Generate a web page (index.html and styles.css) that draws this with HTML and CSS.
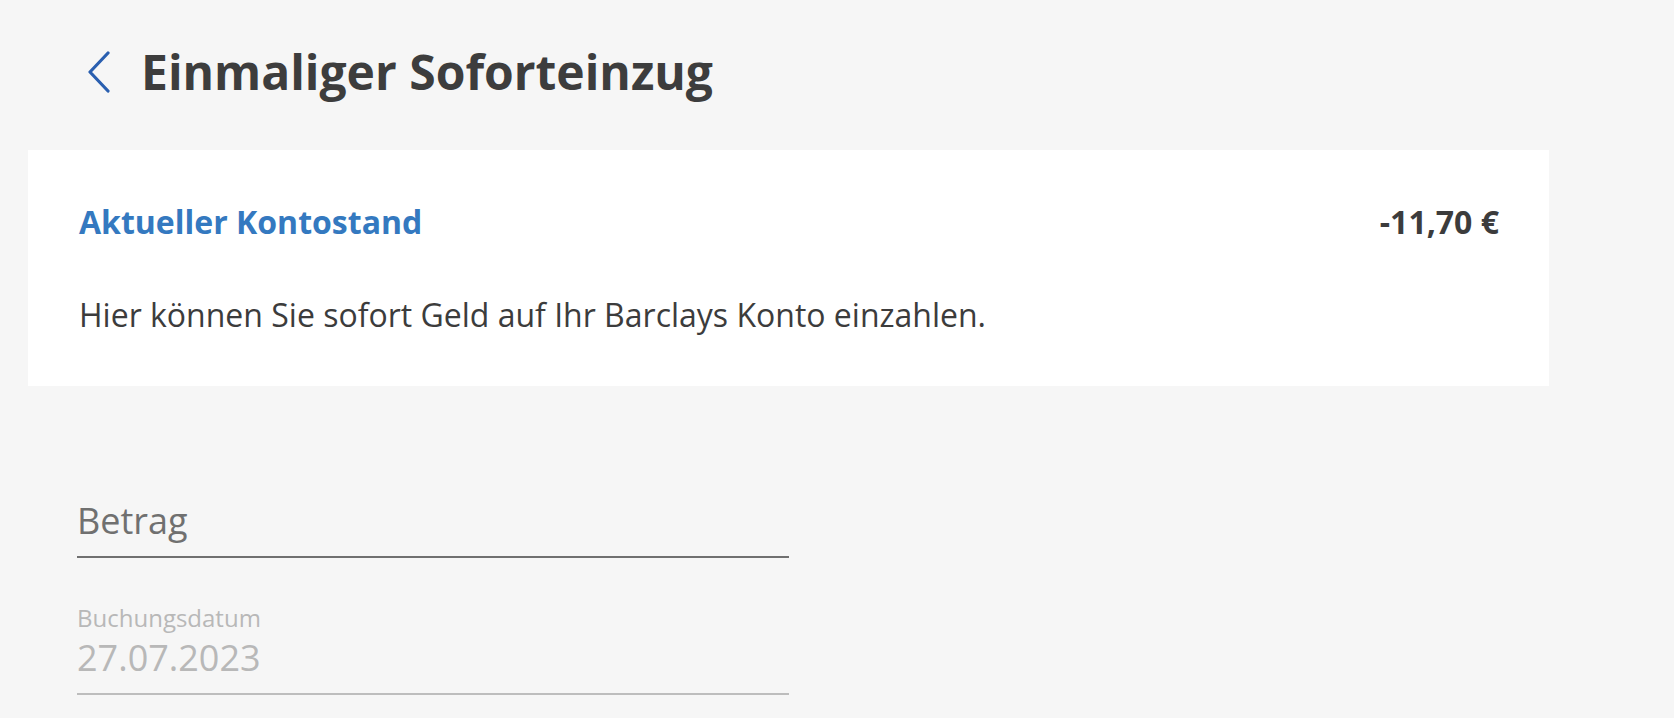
FILE: index.html
```html
<!DOCTYPE html>
<html lang="de">
<head>
<meta charset="utf-8">
<title>Einmaliger Soforteinzug</title>
<link rel="stylesheet" href="styles.css">
</head>
<body>
<div class="page">
  <header class="header">
    <button class="back" aria-label="Zurück">
      <svg width="24" height="42" viewBox="0 0 24 42"><path d="M21 2 L3 21 L21 40" fill="none" stroke="#2a5fb0" stroke-width="3.2" stroke-linecap="round" stroke-linejoin="round"/></svg>
    </button>
    <h1 class="title">Einmaliger Soforteinzug</h1>
  </header>

  <section class="card">
    <div class="card-row">
      <span class="card-label">Aktueller Kontostand</span>
      <span class="card-amount">-11,70 €</span>
    </div>
    <p class="card-text">Hier können Sie sofort Geld auf Ihr Barclays Konto einzahlen.</p>
  </section>

  <form class="form">
    <div class="field">
      <div class="field-input placeholder">Betrag</div>
    </div>
    <div class="field disabled">
      <div class="field-label">Buchungsdatum</div>
      <div class="field-input">27.07.2023</div>
    </div>
  </form>
</div>
</body>
</html>
```

FILE: styles.css
```css
html, body {
  margin: 0;
  padding: 0;
  background: #f6f6f6;
}
body {
  font-family: "Open Sans", "Noto Sans", sans-serif;
  color: #3c3c3c;
}
.page {
  padding-top: 40px;
}
.header {
  display: flex;
  align-items: center;
  gap: 30px;
  padding-left: 87px;
  height: 64px;
}
.back {
  background: none;
  border: 0;
  padding: 0;
  width: 24px;
  height: 42px;
  cursor: pointer;
  display: flex;
}
.title {
  margin: 0;
  font-size: 48px;
  line-height: 64px;
  font-weight: 700;
  color: #3d3d3d;
}
.card {
  margin: 46px 0 0 28px;
  width: 1521px;
  box-sizing: border-box;
  background: #ffffff;
  padding: 50px 50px 49px 51px;
}
.card-row {
  display: flex;
  justify-content: space-between;
  align-items: baseline;
}
.card-label {
  font-size: 32px;
  line-height: 44px;
  font-weight: 700;
  color: #3479c0;
}
.card-amount {
  font-size: 32px;
  line-height: 44px;
  font-weight: 700;
  color: #3c3c3c;
}
.card-text {
  margin: 49px 0 0;
  font-size: 32px;
  line-height: 44px;
  color: #3c3c3c;
}
.form {
  padding: 111px 0 0 77px;
}
.field {
  width: 712px;
  border-bottom: 2px solid #707070;
  padding-bottom: 11px;
}
.field + .field {
  margin-top: 48px;
}
.field-input {
  font-size: 36px;
  line-height: 48px;
}
.placeholder {
  color: #707070;
}
.field-label {
  font-size: 24px;
  line-height: 24px;
  padding-bottom: 4px;
}
.field.disabled {
  border-bottom-color: #bdbdbd;
  color: #b8b8b8;
}
```
